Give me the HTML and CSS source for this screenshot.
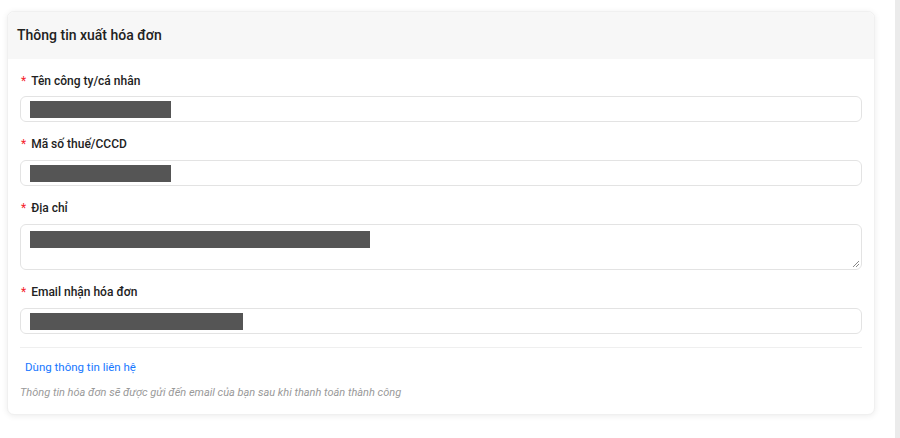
FILE: index.html
```html
<!DOCTYPE html>
<html lang="vi">
<head>
    <meta charset="UTF-8">
    <title>Thông tin xuất hóa đơn</title>
    <link rel="stylesheet" href="styles.css">
</head>
<body>
<div class="page">
    <div class="main">
        <div class="card">
            <div class="card-head">Thông tin xuất hóa đơn</div>
            <div class="card-body">
                <div class="field">
                    <label class="label"><span class="req">*</span>Tên công ty/cá nhân</label>
                    <div class="input"><span class="mask mask-sm"></span></div>
                </div>
                <div class="field">
                    <label class="label"><span class="req">*</span>Mã số thuế/CCCD</label>
                    <div class="input"><span class="mask mask-sm"></span></div>
                </div>
                <div class="field">
                    <label class="label"><span class="req">*</span>Địa chỉ</label>
                    <div class="input textarea">
                        <span class="mask mask-lg"></span>
                        <svg class="grip" width="8" height="8" viewBox="0 0 8 8">
                            <path d="M7 1 L1 7 M7 4 L4 7" stroke="#888" stroke-width="1" fill="none"/>
                        </svg>
                    </div>
                </div>
                <div class="field">
                    <label class="label"><span class="req">*</span>Email nhận hóa đơn</label>
                    <div class="input"><span class="mask mask-md"></span></div>
                </div>
                <div class="divider"></div>
                <a class="link" href="#">Dùng thông tin liên hệ</a>
                <p class="note">Thông tin hóa đơn sẽ được gửi đến email của bạn sau khi thanh toán thành công</p>
            </div>
        </div>
    </div>
    <div class="rail"></div>
</div>
</body>
</html>
```

FILE: styles.css
```css
*{
    margin: 0;
    padding: 0;
    box-sizing: border-box;
}
body{
    background: #fff;
    font-family: Roboto, "Noto Sans", sans-serif;
    color: #222;
}
.page{
    display: flex;
    height: 438px;
}
.main{
    flex: 1;
    padding: 11px 20px 0 7px;
}
.rail{
    width: 5px;
    background: #ebebeb;
}
.card{
    background: #fff;
    border: 1px solid #f0f0f0;
    border-radius: 7px;
    box-shadow: 0 1px 6px rgba(0,0,0,0.08);
    overflow: hidden;
}
.card-head{
    height: 47px;
    line-height: 47px;
    padding-left: 9px;
    background: #f7f7f7;
    font-size: 14px;
    font-weight: 500;
    color: #222;
}
.card-body{
    padding: 14px 12px 13px 12px;
}
.field{
    margin-bottom: 14px;
}
.label{
    display: block;
    height: 17px;
    line-height: 17px;
    margin-bottom: 6px;
    font-size: 12px;
    font-weight: 500;
    color: #222;
}
.field + .field .label{
    margin-bottom: 7px;
}
.req{
    color: #f5222d;
    margin: 0 5px 0 1px;
    font-weight: 400;
}
.input{
    height: 26px;
    border: 1px solid #e3e3e3;
    border-radius: 6px;
    padding: 4px 9px;
    position: relative;
}
.textarea{
    height: 46px;
    padding-top: 6px;
}
.mask{
    display: block;
    height: 17px;
    background: #555;
}
.mask-sm{
    width: 141px;
}
.mask-md{
    width: 213px;
}
.mask-lg{
    width: 340px;
}
.grip{
    position: absolute;
    right: 1px;
    bottom: 1px;
}
.divider{
    height: 1px;
    background: #efefef;
    margin: -1px 0 11px;
}
.link{
    display: block;
    padding-left: 5px;
    font-size: 11.5px;
    line-height: 16px;
    color: #1677ff;
    text-decoration: none;
}
.note{
    margin-top: 10px;
    font-size: 11px;
    line-height: 16px;
    font-style: italic;
    color: #999;
}
```
